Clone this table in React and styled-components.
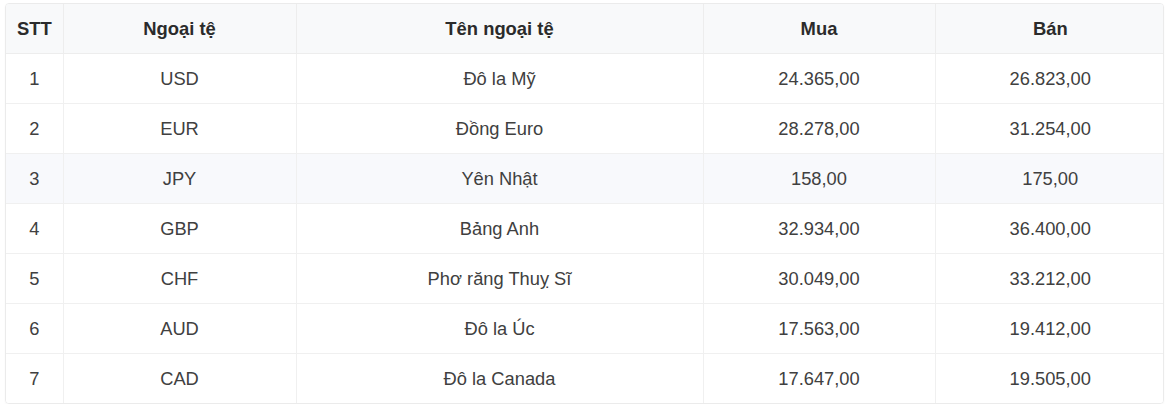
import React from "react";
import styled, { createGlobalStyle } from "styled-components";

const Global = createGlobalStyle`
  html, body { margin: 0; padding: 0; background: #ffffff; }
  body { font-family: "Liberation Sans", Arial, sans-serif; }
`;

const Page = styled.div`
  padding: 3px 6px 0 5px;
`;

const Card = styled.div`
  width: 1159px;
  box-sizing: border-box;
  border: 1px solid #ebebeb;
  border-radius: 4px;
  overflow: hidden;
  box-shadow: 0 1px 2px rgba(0, 0, 0, 0.04);
`;

const Table = styled.table`
  width: 100%;
  border-collapse: collapse;
  table-layout: fixed;
`;

const HeadCell = styled.th`
  height: 49px;
  padding: 0;
  background: #f8f9fa;
  color: #2b2b2b;
  font-size: 18.4px;
  font-weight: 700;
  text-align: center;
  border-bottom: 1px solid #ededed;
  border-left: 1px solid #ededed;
  &:first-child { border-left: none; }
`;

const Row = styled.tr`
  background: ${(p) => (p.$hl ? "#f8f9fc" : "#ffffff")};
  &:last-child td { border-bottom: none; }
`;

const Cell = styled.td`
  height: 49px;
  padding: 0;
  color: #404040;
  font-size: 18.3px;
  text-align: center;
  border-bottom: 1px solid #f0f0f0;
  border-left: 1px solid #f0f0f0;
  &:first-child { border-left: none; }
`;

const cols = [57, 233, 407, 232, 230];

const data = [
  ["1", "USD", "Đô la Mỹ", "24.365,00", "26.823,00"],
  ["2", "EUR", "Đồng Euro", "28.278,00", "31.254,00"],
  ["3", "JPY", "Yên Nhật", "158,00", "175,00"],
  ["4", "GBP", "Bảng Anh", "32.934,00", "36.400,00"],
  ["5", "CHF", "Phơ răng Thuỵ Sĩ", "30.049,00", "33.212,00"],
  ["6", "AUD", "Đô la Úc", "17.563,00", "19.412,00"],
  ["7", "CAD", "Đô la Canada", "17.647,00", "19.505,00"],
];

export default function App() {
  return (
    <>
      <Global />
      <Page>
        <Card>
          <Table>
            <colgroup>
              {cols.map((w, i) => (
                <col key={i} style={{ width: w }} />
              ))}
            </colgroup>
            <thead>
              <tr>
                <HeadCell>STT</HeadCell>
                <HeadCell>Ngoại tệ</HeadCell>
                <HeadCell>Tên ngoại tệ</HeadCell>
                <HeadCell>Mua</HeadCell>
                <HeadCell>Bán</HeadCell>
              </tr>
            </thead>
            <tbody>
              {data.map((r, i) => (
                <Row key={i} $hl={i === 2}>
                  {r.map((c, j) => (
                    <Cell key={j}>{c}</Cell>
                  ))}
                </Row>
              ))}
            </tbody>
          </Table>
        </Card>
      </Page>
    </>
  );
}
